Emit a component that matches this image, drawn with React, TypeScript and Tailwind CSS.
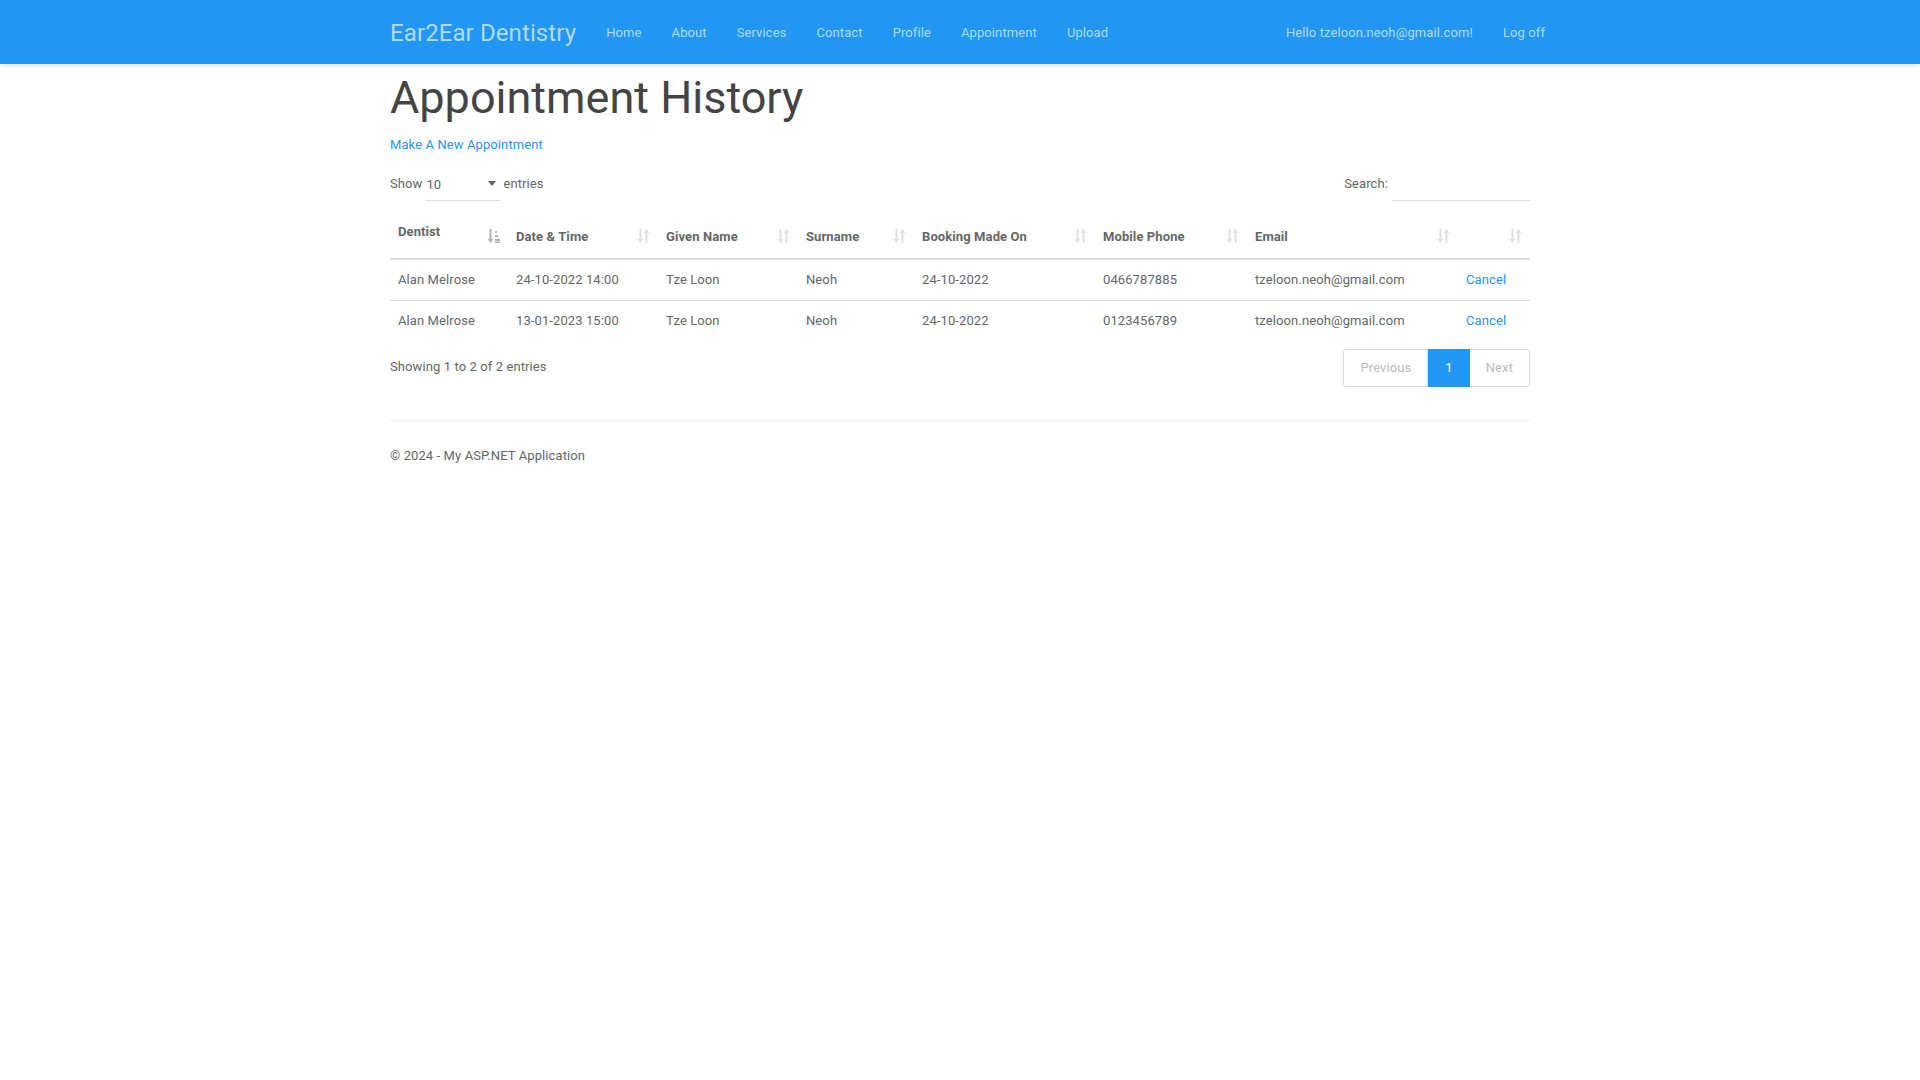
import React from 'react'

type Row = {
  dentist: string
  date: string
  given: string
  surname: string
  booked: string
  phone: string
  email: string
}

const ROWS: Row[] = [
  {
    dentist: 'Alan Melrose',
    date: '24-10-2022 14:00',
    given: 'Tze Loon',
    surname: 'Neoh',
    booked: '24-10-2022',
    phone: '0466787885',
    email: 'tzeloon.neoh@gmail.com',
  },
  {
    dentist: 'Alan Melrose',
    date: '13-01-2023 15:00',
    given: 'Tze Loon',
    surname: 'Neoh',
    booked: '24-10-2022',
    phone: '0123456789',
    email: 'tzeloon.neoh@gmail.com',
  },
]

const NAV = ['Home', 'About', 'Services', 'Contact', 'Profile', 'Appointment', 'Upload']

// glyphicon-sort: down arrow + up arrow
function SortIcon() {
  return (
    <svg width="13" height="14" viewBox="0 0 13 14" className="text-[#e0e0e0]" fill="currentColor">
      <path d="M2.5 0h2v10h2l-3 4-3-4h2z" />
      <path d="M8.5 4h2v10h-2V4h-2l3-4 3 4z" />
    </svg>
  )
}

// glyphicon-sort-by-attributes: down arrow + stacked bars
function SortAscIcon() {
  return (
    <svg width="13" height="14" viewBox="0 0 13 14" className="text-[#b3b3b3]" fill="currentColor">
      <path d="M2.5 0h2v10h2l-3 4-3-4h2z" />
      <rect x="8" y="2" width="2" height="2" />
      <rect x="8" y="6" width="3" height="2" />
      <rect x="8" y="10" width="5" height="2" />
      <rect x="8" y="12.5" width="5" height="1.5" />
    </svg>
  )
}

const COLS = [
  { label: 'Dentist', w: 'w-[118px]', asc: true },
  { label: 'Date & Time', w: 'w-[150px]' },
  { label: 'Given Name', w: 'w-[140px]' },
  { label: 'Surname', w: 'w-[116px]' },
  { label: 'Booking Made On', w: 'w-[181px]' },
  { label: 'Mobile Phone', w: 'w-[152px]' },
  { label: 'Email', w: 'w-[211px]' },
  { label: '', w: 'w-[72px]' },
]

export default function App() {
  return (
    <div className="min-h-screen bg-white font-[Roboto,'Helvetica_Neue',Arial,sans-serif] text-[13px] leading-[24px] tracking-[0.1px] text-[#666]">
      {/* Navbar */}
      <nav className="h-16 bg-[#2196f3] shadow-[0_1px_6px_rgba(0,0,0,0.15)]">
        <div className="w-[1170px] mx-auto h-full flex items-center pl-[15px] pt-[2px]">
          <span className="text-[24px] leading-none text-[#b2dbfb] pr-[15px]">Ear2Ear Dentistry</span>
          <ul className="flex items-center">
            {NAV.map((n) => (
              <li key={n} className="px-[15px] text-[#b2dbfb]">
                {n}
              </li>
            ))}
          </ul>
          <ul className="flex items-center ml-auto">
            <li className="pl-[15px] pr-[15px] text-[#b2dbfb]">Hello tzeloon.neoh@gmail.com!</li>
            <li className="pl-[15px] text-[#b2dbfb]">Log off</li>
          </ul>
        </div>
      </nav>

      <div className="w-[1170px] mx-auto px-[15px] pt-[9px]">
        <h2 className="text-[45px] leading-[1.1] tracking-normal text-[#444] font-normal mb-[10px]">Appointment History</h2>
        <p>
          <a className="text-[#2196f3]">Make A New Appointment</a>
        </p>

        {/* Length + search */}
        <div className="flex items-center justify-between h-[34px] mt-[10px]">
          <div className="flex items-center">
            <span>Show</span>
            <div className="ml-[4px] w-[74px] h-[34px] border-b border-[#ddd] flex items-center justify-between pt-[4px]">
              <span>10</span>
              <svg width="8" height="5" viewBox="0 0 8 5" className="mr-[4px] mt-[-4px]" fill="#666">
                <path d="M0 0h8L4 5z" />
              </svg>
            </div>
            <span className="ml-[3px]">entries</span>
          </div>
          <div className="flex items-center">
            <span>Search:</span>
            <input className="ml-[4px] w-[138px] h-[34px] border-0 border-b border-[#ddd] outline-none bg-transparent" />
          </div>
        </div>

        {/* Table */}
        <table className="w-full table-fixed border-collapse mt-[16px]">
          <thead>
            <tr>
              {COLS.map((c) => (
                <th
                  key={c.label || 'action'}
                  className={`${c.w} relative text-left font-bold align-bottom pl-[8px] pr-[30px] ${
                    c.asc ? 'pt-[3px] pb-[14px]' : 'pt-[8px] pb-[9px]'
                  } border-b-2 border-[#ddd]`}
                >
                  {c.label}
                  <span className="absolute right-[8px] top-[12px] flex">{c.asc ? <SortAscIcon /> : <SortIcon />}</span>
                </th>
              ))}
            </tr>
          </thead>
          <tbody>
            {ROWS.map((r, i) => (
              <tr key={i} className="border-t border-[#ddd]">
                <td className="p-[8px]">{r.dentist}</td>
                <td className="p-[8px]">{r.date}</td>
                <td className="p-[8px]">{r.given}</td>
                <td className="p-[8px]">{r.surname}</td>
                <td className="p-[8px]">{r.booked}</td>
                <td className="p-[8px]">{r.phone}</td>
                <td className="p-[8px]">{r.email}</td>
                <td className="p-[8px]">
                  <a className="text-[#2196f3]">Cancel</a>
                </td>
              </tr>
            ))}
          </tbody>
        </table>

        {/* Info + pagination */}
        <div className="flex items-start justify-between mt-[6px]">
          <div className="pt-[8px]">Showing 1 to 2 of 2 entries</div>
          <ul className="flex mt-[2px]">
            <li className="px-[16px] py-[6px] border border-[#ddd] rounded-l-[3px] text-[#bbb]">Previous</li>
            <li className="px-[16px] py-[6px] border border-[#2196f3] bg-[#2196f3] text-white">1</li>
            <li className="px-[16px] py-[6px] border border-[#ddd] border-l-0 rounded-r-[3px] text-[#bbb]">Next</li>
          </ul>
        </div>

        <hr className="mt-[33px] mb-[23px] border-0 border-t border-[#eee]" />
        <footer>
          <p>© 2024 - My ASP.NET Application</p>
        </footer>
      </div>
    </div>
  )
}
